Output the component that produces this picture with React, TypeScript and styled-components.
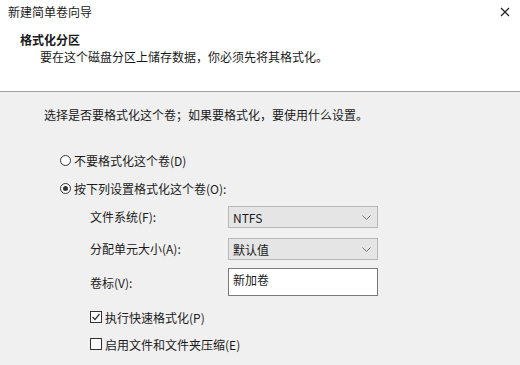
import React from "react";
import styled, { createGlobalStyle } from "styled-components";

const Global = createGlobalStyle`
    html, body {
        margin: 0;
        padding: 0;
        background: #f0f0f0;
    }
    body {
        font-family: "Noto Sans CJK SC", "Noto Sans", sans-serif;
        font-size: 12px;
        color: #1a1a1a;
    }
`;

const Wizard = styled.div`
    width: 520px;
    height: 365px;
    overflow: hidden;
    background: #f0f0f0;
`;

const Header = styled.div`
    height: 91px;
    background: #ffffff;
    border-bottom: 1px solid #a0a0a0;
    box-sizing: content-box;
`;

const TitleBar = styled.div`
    display: flex;
    align-items: center;
    justify-content: space-between;
    height: 22px;
    padding: 1px 10px 0 8px;
`;

const Title = styled.span`
    line-height: 16px;
`;

const CloseIcon = styled.span`
    display: flex;
    width: 10px;
    height: 10px;
    flex: none;
`;

const Heading = styled.div`
    margin: 9px 0 0 20px;
    font-weight: bold;
    line-height: 16px;
`;

const SubText = styled.div`
    margin: 1px 0 0 40px;
    line-height: 16px;
`;

const Body = styled.div`
    padding: 15px 0 0 44px;
    display: flex;
    flex-direction: column;
`;

const Intro = styled.div`
    line-height: 16px;
`;

const Option = styled.label<{ $top: number; $indent: number }>`
    display: flex;
    align-items: center;
    gap: 3px;
    height: 16px;
    margin-top: ${(p) => p.$top}px;
    margin-left: ${(p) => p.$indent}px;
`;

const Radio = styled.span<{ $on?: boolean }>`
    width: 11px;
    height: 11px;
    box-sizing: border-box;
    border: 1px solid #333;
    border-radius: 50%;
    background: #fff;
    display: flex;
    align-items: center;
    justify-content: center;
    &::after {
        content: "";
        width: 5px;
        height: 5px;
        border-radius: 50%;
        background: ${(p) => (p.$on ? "#333" : "transparent")};
    }
`;

const Check = styled.span`
    width: 12px;
    height: 12px;
    box-sizing: border-box;
    border: 1px solid #333;
    background: #fff;
    display: flex;
    align-items: center;
    justify-content: center;
`;

const Settings = styled.div`
    display: grid;
    grid-template-columns: 138px 150px;
    row-gap: 10px;
    margin: 10px 0 0 46px;
    align-items: center;
`;

const FieldLabel = styled.span`
    line-height: 16px;
`;

const Select = styled.div`
    height: 22px;
    box-sizing: border-box;
    border: 1px solid #b8b8b8;
    background: #e5e5e5;
    display: flex;
    align-items: center;
    justify-content: space-between;
    padding: 0 6px 0 4px;
`;

const TextBox = styled.div`
    height: 28px;
    box-sizing: border-box;
    border: 1px solid #7a7a7a;
    background: #fff;
    padding: 3px 4px 0;
    line-height: 16px;
    margin-top: -2px;
`;

const Chevron = () => (
    <svg width="9" height="5" viewBox="0 0 9 5">
        <path d="M0.5 0.5 L4.5 4.5 L8.5 0.5" fill="none" stroke="#777" strokeWidth="1" />
    </svg>
);

export default function App() {
    return (
        <Wizard>
            <Global />
            <Header>
                <TitleBar>
                    <Title>新建简单卷向导</Title>
                    <CloseIcon aria-label="关闭">
                        <svg width="10" height="10" viewBox="0 0 10 10">
                            <path d="M1 1 L9 9 M9 1 L1 9" stroke="#222" strokeWidth="1.2" fill="none" />
                        </svg>
                    </CloseIcon>
                </TitleBar>
                <Heading>格式化分区</Heading>
                <SubText>要在这个磁盘分区上储存数据，你必须先将其格式化。</SubText>
            </Header>
            <Body>
                <Intro>选择是否要格式化这个卷；如果要格式化，要使用什么设置。</Intro>
                <Option $top={29} $indent={16}>
                    <Radio />
                    不要格式化这个卷(D)
                </Option>
                <Option $top={12} $indent={16}>
                    <Radio $on />
                    按下列设置格式化这个卷(O):
                </Option>
                <Settings>
                    <FieldLabel>文件系统(F):</FieldLabel>
                    <Select>
                        NTFS
                        <Chevron />
                    </Select>
                    <FieldLabel>分配单元大小(A):</FieldLabel>
                    <Select>
                        默认值
                        <Chevron />
                    </Select>
                    <FieldLabel>卷标(V):</FieldLabel>
                    <TextBox>新加卷</TextBox>
                </Settings>
                <Option $top={13} $indent={46}>
                    <Check>
                        <svg width="10" height="10" viewBox="0 0 10 10">
                            <path d="M1.5 5 L4 7.5 L8.5 2" fill="none" stroke="#333" strokeWidth="1.2" />
                        </svg>
                    </Check>
                    执行快速格式化(P)
                </Option>
                <Option $top={11} $indent={46}>
                    <Check />
                    启用文件和文件夹压缩(E)
                </Option>
            </Body>
        </Wizard>
    );
}
